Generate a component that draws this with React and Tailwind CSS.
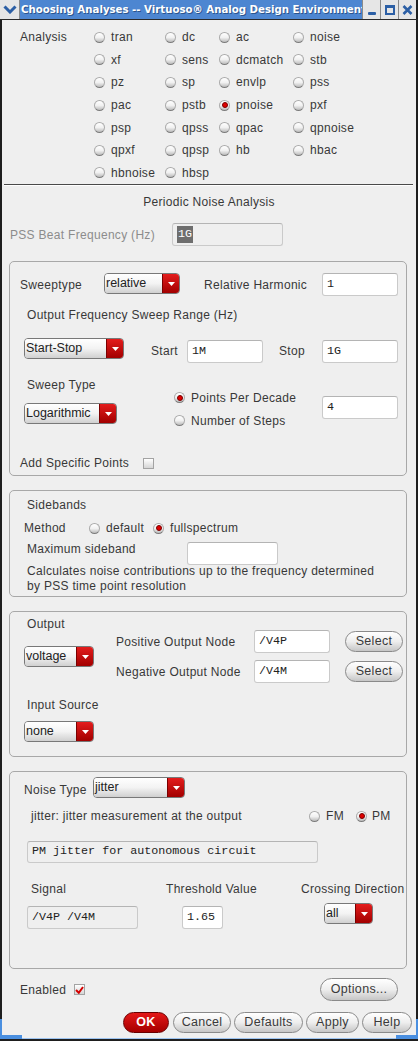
import React from 'react';

const sans = "font-['Liberation_Sans',Arial,sans-serif]";
const mono = "font-['Liberation_Mono','Courier_New',monospace]";

function Radio({ checked }) {
  return (
    <span className="flex h-[11px] w-[11px] shrink-0 items-center justify-center rounded-full border border-[#aaa] border-b-[#7c7c7c] bg-linear-to-b from-white via-[#f1f1f1] to-[#bcbcbc]">
      {checked && <span className="h-[6px] w-[6px] rounded-full border border-[#780000] bg-[#e00000]" />}
    </span>
  );
}

function Check({ checked }) {
  return (
    <span className="relative flex h-[11px] w-[11px] shrink-0 items-center justify-center border border-[#a3a3a3] bg-linear-to-b from-white to-[#d6d6d6]">
      {checked && (
        <svg width="9" height="8" viewBox="0 0 9 8" className="absolute left-[0px] top-[1px]">
          <path d="M1 4L3.8 6.8L8 1" stroke="#d40000" strokeWidth="2" fill="none" />
        </svg>
      )}
    </span>
  );
}

function Dropdown({ value, w, className = '' }) {
  return (
    <div className={`flex h-[21px] ${w} shrink-0 overflow-hidden rounded-[4px] border border-[#787878] ${className}`}>
      <div className="flex flex-1 items-center bg-linear-to-b from-white via-[#f3f3f3] to-[#d0d0d0] pl-[1px] text-[12.5px] leading-none tracking-normal text-[#222]">
        {value}
      </div>
      <div className="flex w-[17px] items-center justify-center border-l border-[#7a0000] bg-linear-to-b from-[#e41c1c] to-[#a20000]">
        <svg width="7" height="4" viewBox="0 0 7 4">
          <path d="M0 0H7L3.5 4Z" fill="#fff" />
        </svg>
      </div>
    </div>
  );
}

function Field({ w, h = 'h-[23px]', disabled, className = '', children }) {
  return (
    <div
      className={`flex ${h} ${w} shrink-0 items-center rounded-[3px] border border-[#cacaca] border-t-[#b4b4b4] ${
        disabled ? 'bg-[#efefef]' : 'bg-white'
      } pl-[4px] ${mono} text-[11.7px] tracking-normal text-[#222] ${className}`}
    >
      {children}
    </div>
  );
}

function Btn({ label, w, h = 'h-[21px]', red, className = '' }) {
  return (
    <div
      className={`flex ${h} ${w} shrink-0 items-center justify-center rounded-full border text-[12.5px] ${
        red
          ? 'border-[#6a0000] bg-linear-to-b from-[#e41818] to-[#a60000] font-bold text-white'
          : 'border-[#8a8a8a] bg-linear-to-b from-white via-[#eeeeee] to-[#c6c6c6] text-[#3a3a3a]'
      } ${className}`}
    >
      {label}
    </div>
  );
}

const analyses = [
  ['tran', 'dc', 'ac', 'noise'],
  ['xf', 'sens', 'dcmatch', 'stb'],
  ['pz', 'sp', 'envlp', 'pss'],
  ['pac', 'pstb', 'pnoise', 'pxf'],
  ['psp', 'qpss', 'qpac', 'qpnoise'],
  ['qpxf', 'qpsp', 'hb', 'hbac'],
  ['hbnoise', 'hbsp', '', ''],
];

export default function App() {
  return (
    <div className={`flex h-[1041px] w-[418px] flex-col overflow-hidden bg-[#efefef] ${sans} text-[12px] tracking-[0.3px] text-[#383838]`}>
      {/* title bar */}
      <div className="flex h-[20px] shrink-0 border-b border-[#2a2a2a]">
        <div className="flex w-[20px] items-center justify-center border-r border-[#8a8a8a] bg-[#e6e6e6]">
          <svg width="14" height="9" viewBox="0 0 14 9">
            <polyline points="1.5,1.5 7,7 12.5,1.5" fill="none" stroke="#2c5fa5" strokeWidth="3" />
          </svg>
        </div>
        <div className="flex min-w-0 flex-1 items-center overflow-hidden whitespace-nowrap bg-[#4d86d1] pl-[1px] font-['DejaVu_Sans',sans-serif] text-[10.2px] font-bold tracking-normal text-white [text-shadow:1px_1px_0_#2c548c]">
          Choosing Analyses -- Virtuoso® Analog Design Environment
        </div>
        <div className="flex w-[18px] items-end justify-center border-l border-[#8a8a8a] bg-[#e6e6e6] pb-[4px]">
          <span className="h-[3px] w-[8px] rounded-[1px] bg-[#2c5fa5]" />
        </div>
        <div className="flex w-[18px] items-center justify-center border-l border-[#8a8a8a] bg-[#e6e6e6]">
          <span className="h-[10px] w-[10px] border-2 border-t-[3px] border-[#2c5fa5]" />
        </div>
        <div className="flex w-[20px] items-center justify-center border-l border-[#8a8a8a] border-r-2 border-r-[#1e1e1e] bg-[#e6e6e6]">
          <svg width="11" height="10" viewBox="0 0 11 10">
            <path d="M1.5 1L9.5 9M9.5 1L1.5 9" stroke="#2c5fa5" strokeWidth="2.6" />
          </svg>
        </div>
      </div>

      {/* body */}
      <div className="relative flex flex-1 flex-col border-x-2 border-b-2 border-[#1e1e1e]">
        {/* analysis choices */}
        <div className="flex pl-[18px] pt-[6px]">
          <div className="flex h-[22.6px] w-[74px] items-center">Analysis</div>
          <div className="grid grid-cols-[71px_54px_74px_1fr]">
            {analyses.flat().map((a, i) => (
              <div key={i} className="flex h-[22.6px] items-center gap-[6px]">
                {a && <Radio checked={a === 'pnoise'} />}
                {a && <span>{a}</span>}
              </div>
            ))}
          </div>
        </div>
        <div className="ml-[2px] mr-[3px] h-[2px] border-t border-b border-t-[#4a4a4a] border-b-white" />

        <div className="mt-[8px] h-[16px] text-center leading-[16px]">Periodic Noise Analysis</div>

        <div className="mt-[13px] flex h-[23px] items-center pl-[8px]">
          <span className="w-[162px] text-[#8c8c8c]">PSS Beat Frequency (Hz)</span>
          <Field w="w-[111px]" disabled className="pl-[3px]">
            <span className="bg-[#6e6e6e] px-[1px] text-white">1G</span>
          </Field>
        </div>

        {/* sweep group */}
        <div className="ml-[7px] mt-[15px] h-[215px] w-[398px] rounded-[5px] border border-[#a8a8a8]">
          <div className="mt-[11px] flex h-[23px] items-center pl-[10px]">
            <span className="w-[84px]">Sweeptype</span>
            <Dropdown value="relative" w="w-[76px]" className="self-start" />
            <span className="ml-[24px] w-[118px]">Relative Harmonic</span>
            <Field w="w-[76px]">1</Field>
          </div>
          <div className="mt-[11px] h-[16px] pl-[17px] leading-[16px]">Output Frequency Sweep Range (Hz)</div>
          <div className="mt-[15px] flex h-[25px] items-center pl-[14px]">
            <Dropdown value="Start-Stop" w="w-[100px]" className="self-start" />
            <span className="ml-[27px] w-[36px]">Start</span>
            <Field w="w-[76px]" className="self-end">1M</Field>
            <span className="ml-[16px] w-[43px]">Stop</span>
            <Field w="w-[76px]" className="self-end">1G</Field>
          </div>
          <div className="mt-[14px] flex pl-[14px]">
            <div className="w-[150px]">
              <div className="h-[16px] pl-[3px] leading-[16px]">Sweep Type</div>
              <Dropdown value="Logarithmic" w="w-[93px]" className="mt-[10px]" />
            </div>
            <div className="w-[148px] pt-[9px]">
              <div className="flex h-[23px] items-center gap-[6px]">
                <Radio checked />
                <span>Points Per Decade</span>
              </div>
              <div className="flex h-[23px] items-center gap-[6px]">
                <Radio />
                <span>Number of Steps</span>
              </div>
            </div>
            <div className="pt-[19px]">
              <Field w="w-[76px]">4</Field>
            </div>
          </div>
          <div className="mt-[23px] flex h-[16px] items-center pl-[10px]">
            <span className="w-[123px]">Add Specific Points</span>
            <Check />
          </div>
        </div>

        {/* sidebands group */}
        <div className="ml-[7px] mt-[14px] h-[107px] w-[398px] rounded-[5px] border border-[#a8a8a8]">
          <div className="mt-[6px] h-[16px] pl-[17px] leading-[16px]">Sidebands</div>
          <div className="mt-[7px] flex h-[16px] items-center pl-[14px]">
            <span className="w-[65px]">Method</span>
            <Radio />
            <span className="ml-[6px] w-[47px]">default</span>
            <Radio checked />
            <span className="ml-[6px]">fullspectrum</span>
          </div>
          <div className="mt-[5px] flex h-[23px] items-start pl-[17px]">
            <span className="h-[16px] w-[160px] leading-[16px]">Maximum sideband</span>
            <Field w="w-[91px]" className="mt-[1px]" />
          </div>
          <div className="pl-[17px] leading-[15px]">
            <div>Calculates noise contributions up to the frequency determined</div>
            <div>by PSS time point resolution</div>
          </div>
        </div>

        {/* output group */}
        <div className="ml-[7px] mt-[14px] flex h-[146px] w-[398px] rounded-[5px] border border-[#a8a8a8] pl-[14px]">
          <div className="w-[92px] pt-[4px]">
            <div className="h-[16px] pl-[3px] leading-[16px]">Output</div>
            <Dropdown value="voltage" w="w-[70px]" className="mt-[14px]" />
            <div className="mt-[30px] h-[16px] pl-[3px] leading-[16px]">Input Source</div>
            <Dropdown value="none" w="w-[70px]" className="mt-[8px]" />
          </div>
          <div className="pt-[18px]">
            <div className="flex h-[23px] items-center">
              <span className="w-[138px]">Positive Output Node</span>
              <Field w="w-[76px]">/V4P</Field>
              <Btn label="Select" w="w-[58px]" className="ml-[15px]" />
            </div>
            <div className="mt-[7px] flex h-[23px] items-center">
              <span className="w-[138px]">Negative Output Node</span>
              <Field w="w-[76px]">/V4M</Field>
              <Btn label="Select" w="w-[58px]" className="ml-[15px]" />
            </div>
          </div>
        </div>

        {/* noise type group */}
        <div className="ml-[7px] mt-[14px] h-[198px] w-[398px] rounded-[5px] border border-[#a8a8a8]">
          <div className="mt-[5px] flex items-start pl-[14px]">
            <span className="mt-[5px] h-[16px] w-[69px] leading-[16px]">Noise Type</span>
            <Dropdown value="jitter" w="w-[92px]" />
          </div>
          <div className="mt-[10px] flex h-[16px] items-center pl-[21px]">
            <span className="w-[278px]">jitter: jitter measurement at the output</span>
            <Radio />
            <span className="ml-[6px] w-[30px]">FM</span>
            <Radio checked />
            <span className="ml-[5px]">PM</span>
          </div>
          <Field w="w-[291px]" h="h-[22px]" disabled className="ml-[17px] mt-[17px]">
            PM jitter for autonomous circuit
          </Field>
          <div className="mt-[18px] flex h-[16px] items-center pl-[21px]">
            <span className="w-[135px]">Signal</span>
            <span className="w-[135px]">Threshold Value</span>
            <span>Crossing Direction</span>
          </div>
          <div className="mt-[6px] flex items-start pl-[17px]">
            <Field w="w-[111px]" disabled className="mt-[3px]">/V4P /V4M</Field>
            <Field w="w-[41px]" className="ml-[44px] mt-[3px]">1.65</Field>
            <Dropdown value="all" w="w-[49px]" className="ml-[101px]" />
          </div>
        </div>

        <div className="mt-[9px] flex h-[23px] items-center pl-[18px] pr-[18px]">
          <span className="w-[54px]">Enabled</span>
          <Check checked />
          <Btn label="Options..." w="w-[78px]" h="h-[23px]" className="ml-auto" />
        </div>

        <div className="mt-[11px] flex justify-end gap-[3px] pr-[4px]">
          <Btn label="OK" w="w-[46px]" red className="mr-[1px]" />
          <Btn label="Cancel" w="w-[58px]" />
          <Btn label="Defaults" w="w-[69px]" />
          <Btn label="Apply" w="w-[53px]" />
          <Btn label="Help" w="w-[50px]" />
        </div>

        {/* window frame bottom */}
        <div className="mt-auto flex h-[4px]">
          <span className="w-[20px] bg-[#4a8fe0]" />
          <span className="flex-1 border-b border-[#9cc3f0]" />
          <span className="w-[20px] bg-[#4a8fe0]" />
        </div>
        <span className="absolute bottom-0 left-[-2px] h-[20px] w-[2px] bg-[#4a8fe0]" />
        <span className="absolute bottom-0 right-[-2px] h-[20px] w-[2px] bg-[#4a8fe0]" />
      </div>
    </div>
  );
}
